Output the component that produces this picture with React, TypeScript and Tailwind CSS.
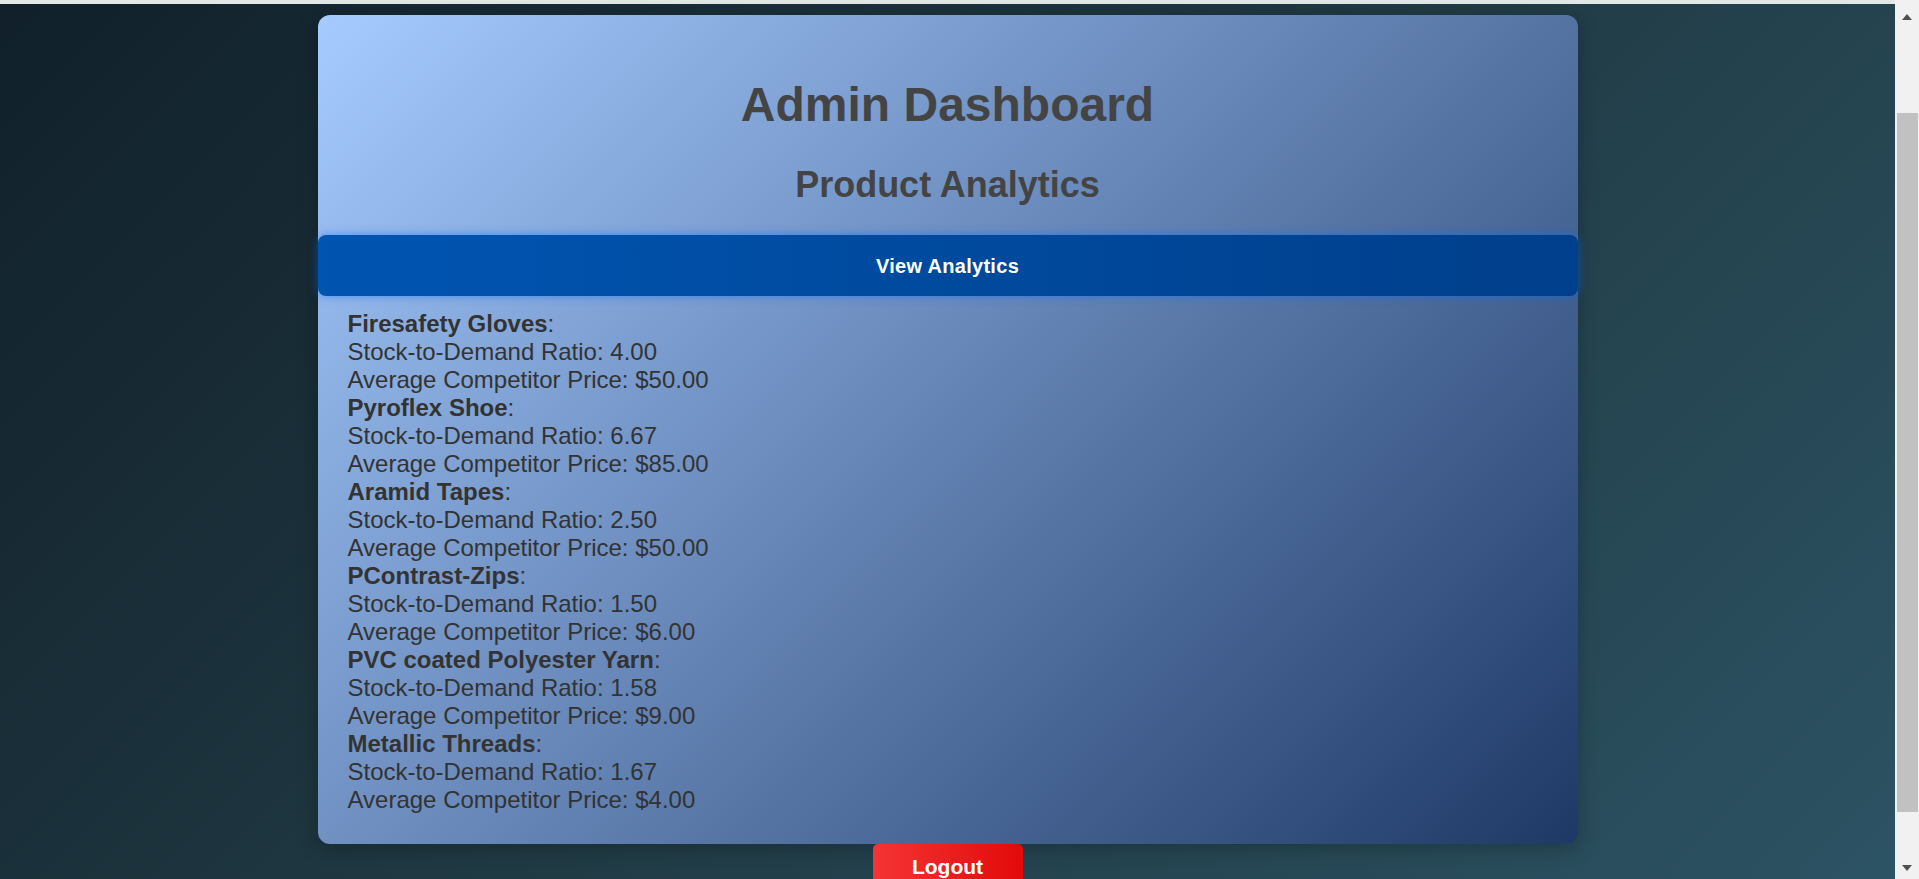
import React from "react";

interface ProductStat {
  name: string;
  ratio: string;
  price: string;
}

const products: ProductStat[] = [
  { name: "Firesafety Gloves", ratio: "4.00", price: "$50.00" },
  { name: "Pyroflex Shoe", ratio: "6.67", price: "$85.00" },
  { name: "Aramid Tapes", ratio: "2.50", price: "$50.00" },
  { name: "PContrast-Zips", ratio: "1.50", price: "$6.00" },
  { name: "PVC coated Polyester Yarn", ratio: "1.58", price: "$9.00" },
  { name: "Metallic Threads", ratio: "1.67", price: "$4.00" },
];

function FakeScrollbar() {
  return (
    <div className="flex w-[24px] shrink-0 flex-col bg-[#f1f1f1]">
      <div className="flex h-[34px] items-center justify-center">
        <svg width="10" height="6" viewBox="0 0 10 6">
          <path d="M5 0 L10 6 L0 6 Z" fill="#505050" />
        </svg>
      </div>
      <div className="mt-[79px] ml-[2px] h-[699px] w-[21px] bg-[#c1c1c1]" />
      <div className="flex flex-1 items-end justify-center pb-[8px]">
        <svg width="10" height="6" viewBox="0 0 10 6">
          <path d="M0 0 L10 0 L5 6 Z" fill="#505050" />
        </svg>
      </div>
    </div>
  );
}

export default function App() {
  return (
    <div className="flex h-[879px] w-full overflow-hidden font-['Liberation_Sans',Arial,sans-serif]">
      <div className="flex flex-1 flex-col bg-[linear-gradient(135deg,#11202a,#203a43,#2c5364)]">
        <div className="h-[4px] shrink-0 bg-[#e1e8e6]" />

        <div className="mx-auto mt-[11px] w-[1260px] shrink-0 rounded-xl bg-[linear-gradient(135deg,#a6cbff,#1e3966)] pt-[30px] pb-[30px] shadow-[0_4px_20px_rgba(0,0,0,0.25)]">
          <h1 className="mt-[32px] mb-[32px] text-center text-[48px] leading-[55px] font-bold text-[#444]">
            Admin Dashboard
          </h1>
          <h2 className="mb-[30px] text-center text-[36px] leading-[41px] font-bold text-[#444]">
            Product Analytics
          </h2>

          <button className="flex h-[61px] w-full items-center justify-center rounded-lg bg-[linear-gradient(90deg,#0055b1,#003f8b)] text-[20px] font-bold tracking-[0.3px] text-white shadow-[0_0_10px_rgba(0,110,255,0.55)]">
            View Analytics
          </button>

          <div className="mt-[14px] px-[30px] text-[24px] leading-[28px] text-[#333]">
            {products.map((p) => (
              <div key={p.name}>
                <div>
                  <strong>{p.name}</strong>:
                </div>
                <div>Stock-to-Demand Ratio: {p.ratio}</div>
                <div>Average Competitor Price: {p.price}</div>
              </div>
            ))}
          </div>
        </div>

        <button className="mx-auto h-[46px] w-[150px] shrink-0 rounded-[5px] bg-[linear-gradient(90deg,#f53434,#e20a0a)] text-[21px] font-bold text-white">
          Logout
        </button>
      </div>

      <FakeScrollbar />
    </div>
  );
}
